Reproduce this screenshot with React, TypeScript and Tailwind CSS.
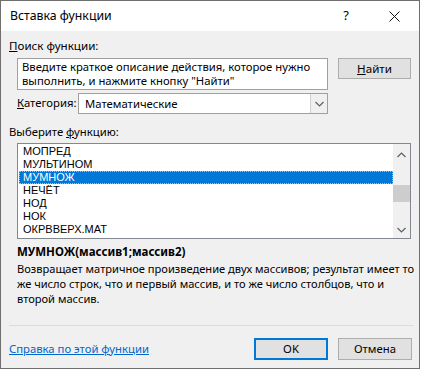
import React from 'react'

const items = ['МОПРЕД', 'МУЛЬТИНОМ', 'МУМНОЖ', 'НЕЧЁТ', 'НОД', 'НОК', 'ОКРВВЕРХ.МАТ']

function Chevron({ up = false, className = '' }: { up?: boolean; className?: string }) {
  return (
    <svg width="9" height="6" viewBox="0 0 9 6" className={className}>
      <path d={up ? 'M0.5 5 L4.5 1 L8.5 5' : 'M0.5 1 L4.5 5 L8.5 1'} fill="none" stroke="currentColor" strokeWidth="1.2" />
    </svg>
  )
}

export default function App() {
  return (
    <div className="w-[421px] h-[370px] bg-white" style={{ fontFamily: '"Noto Sans", "DejaVu Sans", sans-serif' }}>
      <div className="w-[420px] h-[369px] border border-[#6f6f6f] flex flex-col text-[11.3px] text-black">
        {/* Title bar */}
        <div className="h-[30px] bg-white flex items-center shrink-0">
          <span className="pl-[9px] text-[12.3px] flex-1">Вставка функции</span>
          <span className="w-[20px] text-center text-[13px] mr-[33px]">?</span>
          <svg width="11" height="11" viewBox="0 0 11 11" className="mr-[19px]">
            <path d="M0.5 0.5 L10.5 10.5 M10.5 0.5 L0.5 10.5" stroke="#111" strokeWidth="1" />
          </svg>
        </div>

        {/* Body */}
        <div className="flex-1 bg-[#f0f0f0] flex flex-col pl-[8px]">
          <div className="mt-[7px] leading-[15px] text-[11.6px]">
            <span className="underline">П</span>оиск функции:
          </div>

          <div className="flex mt-[5px] ml-[8px]">
            <div className="w-[311px] h-[32px] bg-white border border-[#a0a0a0] px-[4px] pt-[1px] leading-[14px]">
              Введите краткое описание действия, которое нужно выполнить, и нажмите кнопку "Найти"
            </div>
            <button className="ml-[10px] w-[73px] h-[21px] bg-[#e1e1e1] border border-[#adadad] text-[11.6px] leading-none">
              <span className="underline">Н</span>айти
            </button>
          </div>

          <div className="flex items-center mt-[3px] ml-[8px]">
            <span className="w-[61px] whitespace-nowrap">
              <span className="underline">К</span>атегория:
            </span>
            <div className="w-[250px] h-[21px] bg-white border border-[#a0a0a0] flex">
              <span className="flex-1 pl-[6px] leading-[19px]">Математические</span>
              <div className="w-[17px] border-l border-[#cfcfcf] bg-[#f0f0f0] flex items-center justify-center text-[#606060]">
                <Chevron />
              </div>
            </div>
          </div>

          <div className="mt-[10px] leading-[15px]">
            Выберите <span className="underline">ф</span>ункцию:
          </div>

          <div className="mt-[4px] ml-[8px] w-[394px] h-[96px] bg-white border border-[#828790] flex">
            <div className="flex-1 pt-[1px] pl-[1px]" style={{ fontFamily: '"Liberation Sans", Arial, sans-serif' }}>
              {items.map((it) => (
                <div
                  key={it}
                  className={
                    it === 'МУМНОЖ'
                      ? 'h-[13px] leading-[11px] text-[11px] pl-[3px] bg-[#0078d7] text-white border border-dotted border-[#9cc4ea]'
                      : 'h-[13px] leading-[13px] text-[11px] pl-[4px]'
                  }
                >
                  {it}
                </div>
              ))}
            </div>
            <div className="w-[17px] bg-[#f0f0f0] flex flex-col items-center text-[#606060]">
              <div className="h-[17px] flex items-center justify-center mt-[2px]">
                <Chevron up />
              </div>
              <div className="w-[17px] h-[17px] bg-[#cdcdcd] mt-[22px]" />
              <div className="flex-1" />
              <div className="h-[17px] flex items-center justify-center">
                <Chevron />
              </div>
            </div>
          </div>

          <div className="mt-[5px] ml-[8px] font-bold leading-[15px] text-[11.5px]">МУМНОЖ(массив1;массив2)</div>
          <div className="mt-[2px] ml-[8px] w-[400px] leading-[15px] text-[11.1px]">
            Возвращает матричное произведение двух массивов; результат имеет то же число строк, что и первый массив, и то же число столбцов, что и второй массив.
          </div>

          <div className="flex-1" />
          <div className="h-px bg-[#dcdcdc] mr-[5px]" />

          <div className="flex items-center mt-[12px] mb-[8px]">
            <span className="flex-1 text-[#0066cc] underline">Справка по этой функции</span>
            <button className="w-[74px] h-[22px] bg-[#e1e1e1] border-2 border-[#0078d7]">OK</button>
            <button className="ml-[10px] mr-[7px] w-[74px] h-[22px] bg-[#e1e1e1] border border-[#adadad]">Отмена</button>
          </div>
        </div>
      </div>
    </div>
  )
}
